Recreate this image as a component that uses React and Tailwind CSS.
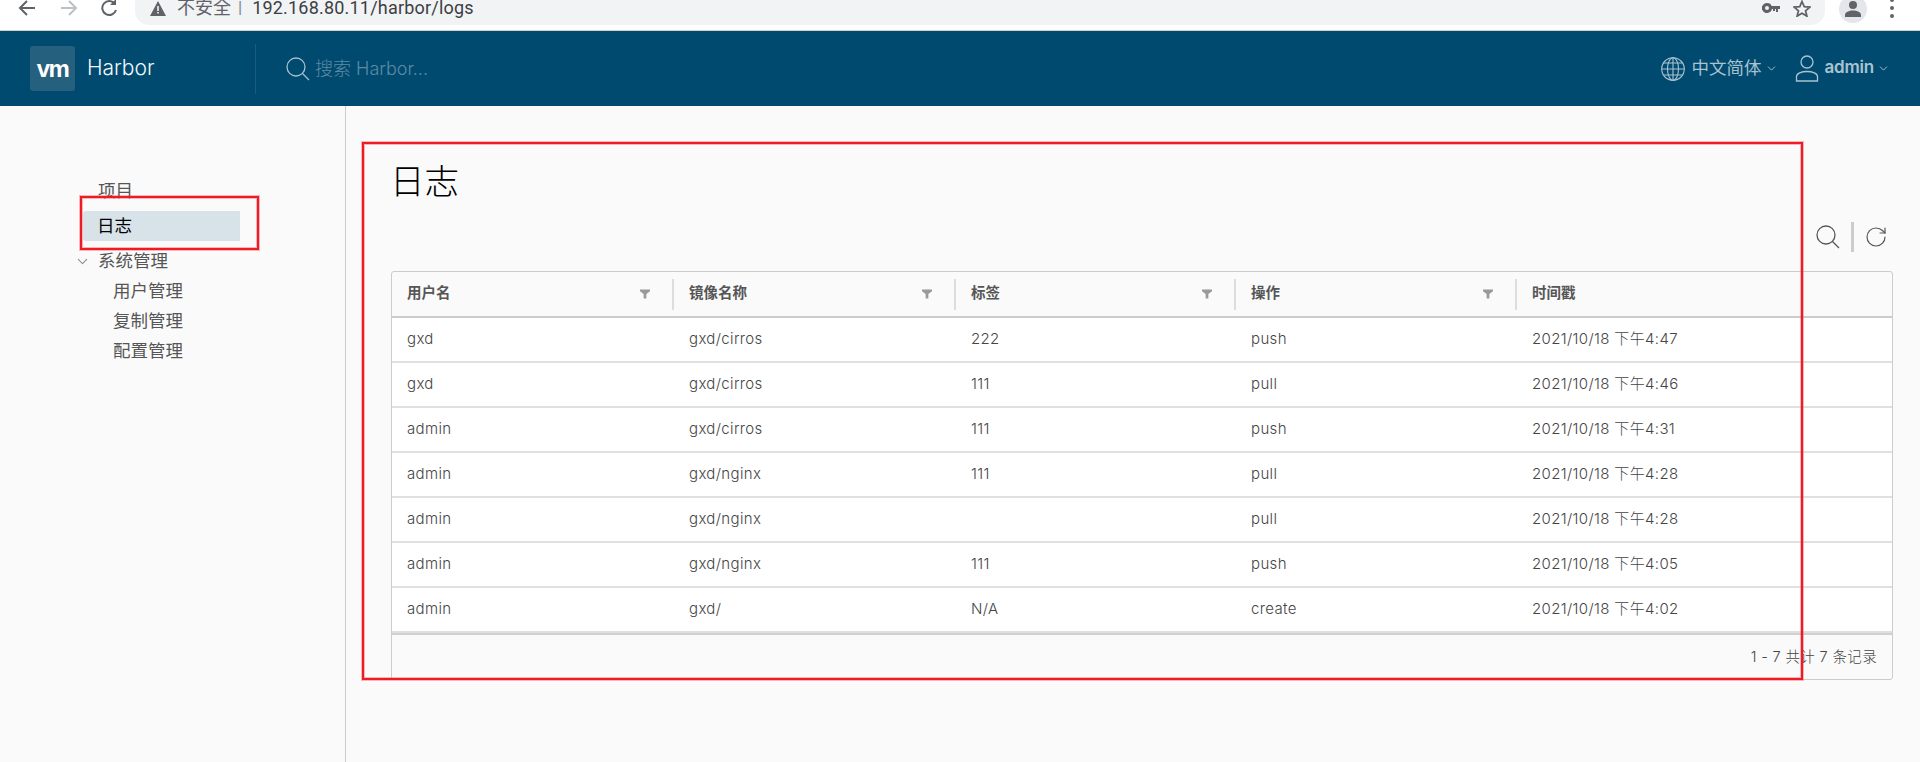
import { ChevronDown, RotateCw } from 'lucide-react';

const sans = 'font-["Inter","Noto_Sans_CJK_SC",sans-serif]';

const logs = [
  ['gxd', 'gxd/cirros', '222', 'push', '2021/10/18 下午4:47'],
  ['gxd', 'gxd/cirros', '111', 'pull', '2021/10/18 下午4:46'],
  ['admin', 'gxd/cirros', '111', 'push', '2021/10/18 下午4:31'],
  ['admin', 'gxd/nginx', '111', 'pull', '2021/10/18 下午4:28'],
  ['admin', 'gxd/nginx', '', 'pull', '2021/10/18 下午4:28'],
  ['admin', 'gxd/nginx', '111', 'push', '2021/10/18 下午4:05'],
  ['admin', 'gxd/', 'N/A', 'create', '2021/10/18 下午4:02'],
];

const columns = ['用户名', '镜像名称', '标签', '操作', '时间戳'];

function BrowserBar() {
  return (
    <div className="flex h-[31px] items-start overflow-hidden border-b border-[#d0d0d0] bg-white text-[#5f6368]">
      <div className="flex h-[30px] w-[135px] shrink-0 items-start">
        <svg className="ml-[18px] mt-[-2px]" width="18" height="20" viewBox="0 0 18 20" fill="none" stroke="#5f6368" strokeWidth="2">
          <path d="M17 10H2M9 3l-7 7 7 7" />
        </svg>
        <svg className="ml-[24px] mt-[-2px]" width="18" height="20" viewBox="0 0 18 20" fill="none" stroke="#bdc1c6" strokeWidth="2">
          <path d="M1 10h15M9 3l7 7-7 7" />
        </svg>
        <svg className="ml-[22px] mt-[-2px]" width="18" height="20" viewBox="0 0 18 20" fill="none" stroke="#5f6368" strokeWidth="2">
          <path d="M15 6a7 7 0 1 0 1 6" />
          <path d="M16 1v6h-6" fill="#5f6368" stroke="none" />
        </svg>
      </div>
      <div className="flex h-[25px] w-[1690px] shrink-0 items-center rounded-b-[14px] bg-[#f1f3f4] font-['Roboto','Noto_Sans_CJK_SC',sans-serif]">
        <div className="mt-[-9px] flex w-full items-center">
          <svg className="ml-[15px]" width="16" height="15" viewBox="0 0 16 15">
            <path d="M8 0l8 15H0z" fill="#5f6368" />
            <path d="M7.2 5h1.6v5H7.2zM7.2 11h1.6v1.6H7.2z" fill="#f1f3f4" />
          </svg>
          <span className="ml-[11px] w-[54px] text-[18px] leading-none">不安全</span>
          <span className="ml-[7px] text-[17px] text-[#80868b]">|</span>
          <span className="ml-[10px] text-[18px] leading-none tracking-[0.2px] text-[#3c4043]">192.168.80.11/harbor/logs</span>
          <svg className="ml-auto" width="18" height="10" viewBox="0 0 18 10" fill="#5f6368">
            <path d="M5 0a5 5 0 1 1-4.6 7H0V3h.4A5 5 0 0 1 5 0zm0 3a2 2 0 1 0 0 4 2 2 0 0 0 0-4z" />
            <path d="M9 3h9v3h-2v3h-2V6h-1v2h-2V6H9z" />
          </svg>
          <svg className="ml-[13px] mr-[14px]" width="18" height="17" viewBox="0 0 24 23" fill="none" stroke="#5f6368" strokeWidth="2.4">
            <path d="M12 2l3 7 7.500 .6-5.700 4.900 1.800 7.300L12 18l-6.600 3.800 1.800-7.300L1.500 9.600 9 9z" />
          </svg>
        </div>
      </div>
      <div className="ml-[14px] mt-[-5px] flex h-[28px] w-[28px] items-center justify-center rounded-full bg-[#e4e6eb]">
        <svg width="16" height="16" viewBox="0 0 16 16" fill="#5f6368">
          <circle cx="8" cy="4" r="4" />
          <path d="M0 16v-2c0-3 4-4.500 8-4.500s8 1.500 8 4.500v2z" />
        </svg>
      </div>
      <div className="ml-[23px] mt-[-2px] flex flex-col gap-[4px]">
        <span className="h-[4px] w-[4px] rounded-full bg-[#5f6368]" />
        <span className="h-[4px] w-[4px] rounded-full bg-[#5f6368]" />
        <span className="h-[4px] w-[4px] rounded-full bg-[#5f6368]" />
      </div>
    </div>
  );
}

function TopNav() {
  return (
    <header className={`flex h-[75px] items-center bg-[#004a70] ${sans}`}>
      <div className="ml-[30px] flex h-[45px] w-[45px] items-center justify-center rounded-[3px] bg-[#25607f]">
        <span className="font-['Liberation_Sans',sans-serif] text-[24px] font-bold leading-none tracking-[-1.5px] text-white">vm</span>
      </div>
      <span className="ml-[12px] mt-[-2px] w-[168px] text-[21px] font-light text-[#f4f8fa]">Harbor</span>
      <div className="h-[50px] w-px bg-[#1b5c7e]" />
      <svg className="ml-[30px]" width="24" height="24" viewBox="0 0 24 24" fill="none" stroke="#a6c1ce" strokeWidth="1.300">
        <circle cx="10" cy="10" r="9" />
        <path d="M16.500 16.500L23 23" />
      </svg>
      <span className="ml-[5px] text-[18px] font-light text-[#5d8aa3]">搜索 Harbor...</span>
      <div className="ml-auto flex items-center text-[#a9c3d0]">
        <svg width="24" height="24" viewBox="0 0 24 24" fill="none" stroke="#a9c3d0" strokeWidth="1.100">
          <circle cx="12" cy="12" r="11.300" />
          <ellipse cx="12" cy="12" rx="5.500" ry="11.300" />
          <path d="M12 .7v22.600M.7 12h22.600M2.500 6h19M2.500 18h19" />
        </svg>
        <span className="ml-[6px] mt-[-2px] text-[17.500px] leading-none">中文简体</span>
        <ChevronDown className="ml-[4px]" size={13} strokeWidth={1.700} />
        <svg className="ml-[17px]" width="24" height="27" viewBox="0 0 24 27" fill="none" stroke="#a9c3d0" strokeWidth="1.300">
          <circle cx="12" cy="7" r="6" />
          <path d="M1.500 26v-4.500c0-3 5-5 10.500-5s10.500 2 10.500 5V26z" />
        </svg>
        <span className="ml-[5px] mt-[-2px] text-[17px] font-semibold leading-none tracking-[-0.2px]">admin</span>
        <ChevronDown className="ml-[3px] mr-[30px]" size={13} strokeWidth={1.700} />
      </div>
    </header>
  );
}

function Sidebar() {
  return (
    <aside className={`h-full w-[346px] shrink-0 border-r border-[#cccccc] pl-[83px] pt-[70px] text-[17.500px] text-[#565656] ${sans}`}>
      <div className="flex h-[30px] items-center pl-[15px]">项目</div>
      <div className="mt-[5px] flex h-[30px] w-[157px] items-center rounded-l-[3px] bg-[#d8e3e9] pl-[14px] text-black">日志</div>
      <div className="relative mt-[5px] flex h-[30px] items-center pl-[15px]">
        <ChevronDown className="absolute left-[-9px] text-[#8c8c8c]" size={17} strokeWidth={1.500} />
        系统管理
      </div>
      <div className="flex h-[30px] items-center pl-[30px]">用户管理</div>
      <div className="flex h-[30px] items-center pl-[30px]">复制管理</div>
      <div className="flex h-[30px] items-center pl-[30px]">配置管理</div>
    </aside>
  );
}

function LogTable() {
  return (
    <div className="w-[1502px] overflow-hidden rounded-[3px] border border-[#cccccc] bg-[#fafafa] text-[15px] font-light tracking-[0.35px] text-[#454545]">
      <div className="grid h-[46px] grid-cols-[282px_282px_280px_281px_1fr] items-center border-b-2 border-[#cccccc]">
        {columns.map((title, i) => (
          <div key={title} className={`flex h-[31px] items-center justify-between pb-[3px] pl-[15px] pr-[15px] font-semibold tracking-normal text-[#565656] ${i < 4 ? 'border-r-2 border-[#dddddd]' : ''}`}>
            <span className="text-[14.500px]">{title}</span>
            {i < 4 && (
              <svg className="mr-[7px] mt-[3px]" width="10" height="10" viewBox="0 0 11 10" fill="#999999">
                <path d="M0 0h11v2L7 5v5H4V5L0 2z" />
              </svg>
            )}
          </div>
        ))}
      </div>
      <div className="bg-white">
        {logs.map((row, i) => (
          <div key={i} className="grid h-[45px] grid-cols-[282px_282px_280px_281px_1fr] items-center border-b-2 border-[#e0e0e0]">
            {row.map((cell, j) => (
              <div key={j} className="pl-[15px]">{cell}</div>
            ))}
          </div>
        ))}
      </div>
      <div className="flex h-[46px] items-center justify-end border-t-2 border-[#d0d0d0] pr-[15px] text-[14.500px]">
        1 - 7 共计 7 条记录
      </div>
    </div>
  );
}

export default function App() {
  return (
    <div className="relative flex h-[762px] w-[1920px] flex-col overflow-hidden bg-[#fafafa]">
      <BrowserBar />
      <TopNav />
      <div className="flex min-h-0 flex-1">
        <Sidebar />
        <main className={`pl-[45px] ${sans}`}>
          <h1 className="ml-[-1px] mt-[55px] h-[42px] text-[34.500px] font-light leading-[42px] text-black">日志</h1>
          <div className="flex h-[68px] w-[1502px] items-end justify-end pb-[19px] text-[#565656]">
            <svg className="mb-[3px]" width="24" height="24" viewBox="0 0 24 24" fill="none" stroke="#565656" strokeWidth="1.300">
              <circle cx="10" cy="10" r="9" />
              <path d="M16.500 16.500L23 23" />
            </svg>
            <div className="ml-[11px] h-[30px] w-[3px] bg-[#cccccc]" />
            <RotateCw className="ml-[10px] mb-[3px] mr-[5px]" size={24} strokeWidth={1.200} />
          </div>
          <LogTable />
        </main>
      </div>
      {/* annotations drawn over the screenshot */}
      <div className="pointer-events-none absolute left-[80px] top-[196px] h-[54px] w-[179px] border-2 border-[#ed1c24] shadow-[0_0_0_1px_rgba(237,28,36,0.3),inset_0_0_0_1px_rgba(237,28,36,0.3)]" />
      <div className="pointer-events-none absolute left-[362px] top-[142px] h-[538px] w-[1441px] border-2 border-[#ed1c24] shadow-[0_0_0_1px_rgba(237,28,36,0.3),inset_0_0_0_1px_rgba(237,28,36,0.3)]" />
    </div>
  );
}
